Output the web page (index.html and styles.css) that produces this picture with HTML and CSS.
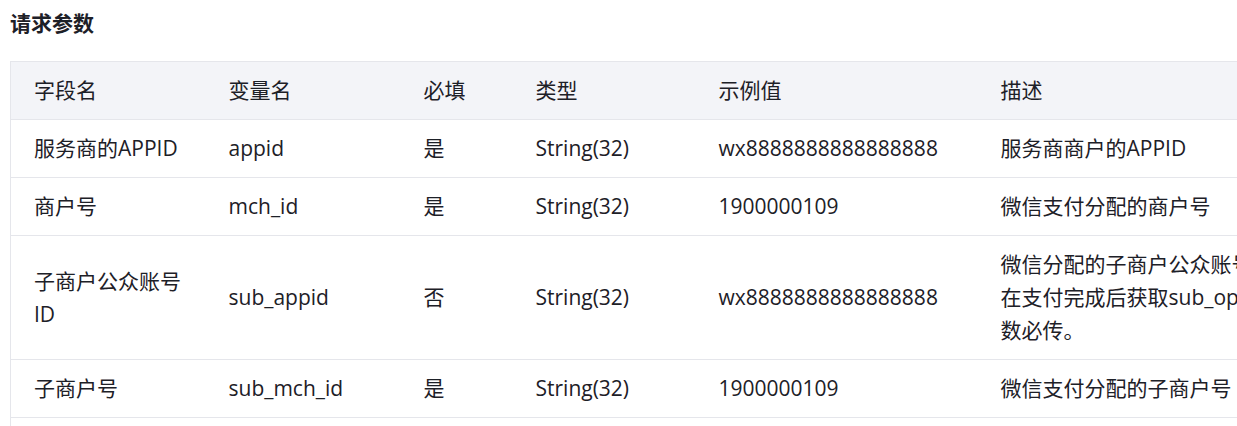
FILE: index.html
```html
<!DOCTYPE html>
<html lang="zh-CN">
<head>
<meta charset="utf-8">
<title>请求参数</title>
<link rel="stylesheet" href="styles.css">
</head>
<body>
<div class="page">
  <h3 class="title">请求参数</h3>
  <table class="params">
    <colgroup>
      <col class="c-name"><col class="c-var"><col class="c-req"><col class="c-type"><col class="c-ex"><col class="c-desc">
    </colgroup>
    <thead>
      <tr><th>字段名</th><th>变量名</th><th>必填</th><th>类型</th><th>示例值</th><th>描述</th></tr>
    </thead>
    <tbody>
      <tr><td>服务商的APPID</td><td>appid</td><td>是</td><td>String(32)</td><td>wx8888888888888888</td><td>服务商商户的APPID</td></tr>
      <tr><td>商户号</td><td>mch_id</td><td>是</td><td>String(32)</td><td>1900000109</td><td>微信支付分配的商户号</td></tr>
      <tr><td>子商户公众账号ID</td><td>sub_appid</td><td>否</td><td>String(32)</td><td>wx8888888888888888</td><td>微信分配的子商户公众账号ID，如需在支付完成后获取sub_openid则此参数必传。</td></tr>
      <tr><td>子商户号</td><td>sub_mch_id</td><td>是</td><td>String(32)</td><td>1900000109</td><td>微信支付分配的子商户号</td></tr>
      <tr class="more"><td>设备号</td><td>device_info</td><td>否</td><td>String(32)</td><td>013467007045764</td><td>终端设备号</td></tr>
    </tbody>
  </table>
</div>
</body>
</html>
```

FILE: styles.css
```css
html, body {
  margin: 0;
  padding: 0;
  overflow: hidden;
  background: #fff;
}

.page {
  padding: 6px 10px 0;
  font-family: "Open Sans", "Noto Sans CJK SC", sans-serif;
  font-size: 21px;
  color: #1d2027;
}

.title {
  margin: 0 0 22px;
  font-size: 21px;
  line-height: 33px;
  font-weight: 700;
  font-family: "Noto Sans CJK SC", sans-serif;
}

.params {
  border-collapse: collapse;
  table-layout: fixed;
  width: 1365px;
  border-left: 1px solid #e5e6eb;
  border-top: 1px solid #e5e6eb;
}

.c-name { width: 195px; }
.c-var { width: 195px; }
.c-req { width: 112px; }
.c-type { width: 183px; }
.c-ex { width: 282px; }
.c-desc { width: 398px; }

.params th,
.params td {
  padding: 12px 24px 12px 23px;
  line-height: 33px;
  text-align: left;
  font-weight: 400;
  border-bottom: 1px solid #e5e6eb;
  vertical-align: middle;
  word-break: normal;
}

.params thead th {
  background: #f3f4f8;
}

.params .more td {
  padding-top: 20px;
}
```
